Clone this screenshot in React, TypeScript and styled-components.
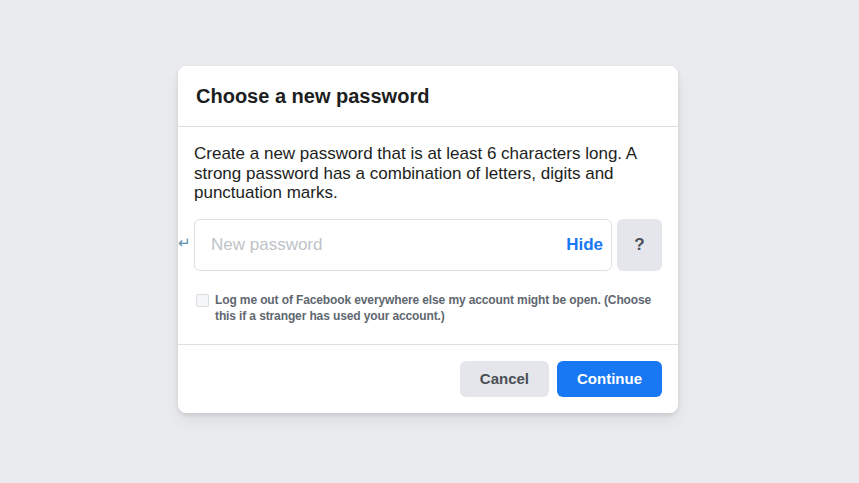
import React from "react";
import styled, { createGlobalStyle } from "styled-components";

const Global = createGlobalStyle`
  html, body { margin: 0; padding: 0; }
  body {
    background: #e9ebee;
    font-family: "Liberation Sans", Arial, Helvetica, sans-serif;
    -webkit-font-smoothing: antialiased;
  }
`;

const Page = styled.div`
  min-height: 483px;
  box-sizing: border-box;
  padding: 66px 0 0 178px;
`;

const Card = styled.div`
  width: 500px;
  background: #fff;
  border-radius: 8px;
  box-shadow: 0 2px 4px rgba(0, 0, 0, 0.1), 0 8px 16px rgba(0, 0, 0, 0.06);
`;

const Header = styled.div`
  height: 61px;
  box-sizing: border-box;
  padding: 0 16px 1px 18px;
  display: flex;
  align-items: center;
  border-bottom: 1px solid #dddfe2;
`;

const Title = styled.h2`
  margin: 0;
  font-size: 20px;
  font-weight: bold;
  color: #1c1e21;
  line-height: 24px;
`;

const Body = styled.div`
  padding: 17px 16px 20px 16px;
  border-bottom: 1px solid #dddfe2;
`;

const Intro = styled.p`
  margin: 0 0 16px 0;
  font-size: 17px;
  line-height: 19.5px;
  color: #1c1e21;
  width: 460px;
`;

const FieldRow = styled.div`
  position: relative;
  display: flex;
  gap: 5px;
  align-items: stretch;
`;

const ReturnMark = styled.span`
  position: absolute;
  left: -16px;
  top: 14px;
  font-size: 15px;
  color: #5b8fb0;
  line-height: 20px;
`;

const InputBox = styled.div`
  width: 418px;
  height: 52px;
  box-sizing: border-box;
  border: 1px solid #dddfe2;
  border-radius: 6px;
  display: flex;
  align-items: center;
  padding: 0 8px 0 16px;
`;

const Placeholder = styled.span`
  flex: 1;
  font-size: 17px;
  color: #bec3c9;
`;

const HideLink = styled.span`
  font-size: 17px;
  font-weight: bold;
  color: #1877f2;
`;

const HelpButton = styled.div`
  width: 45px;
  height: 52px;
  border-radius: 6px;
  background: #e4e6eb;
  display: flex;
  align-items: center;
  justify-content: center;
  font-size: 17px;
  font-weight: bold;
  color: #4b4f56;
`;

const CheckRow = styled.label`
  display: flex;
  gap: 6px;
  margin-top: 21px;
  padding-left: 2px;
`;

const Box = styled.span`
  flex: none;
  width: 13px;
  height: 13px;
  margin-top: 2px;
  box-sizing: border-box;
  border: 1px solid #dadde1;
  border-radius: 2px;
  background: #f5f6f7;
`;

const CheckText = styled.span`
  font-size: 12px;
  font-weight: bold;
  line-height: 16px;
  letter-spacing: -0.12px;
  color: #606770;
`;

const Footer = styled.div`
  display: flex;
  justify-content: flex-end;
  gap: 8px;
  padding: 16px;
`;

const Button = styled.button<{ $primary?: boolean }>`
  height: 36px;
  padding: 0 20px;
  min-width: ${(p) => (p.$primary ? "105px" : "88px")};
  border: none;
  border-radius: 6px;
  font-family: inherit;
  font-size: 15px;
  font-weight: bold;
  background: ${(p) => (p.$primary ? "#1877f2" : "#e4e6eb")};
  color: ${(p) => (p.$primary ? "#ffffff" : "#4b4f56")};
`;

export default function App() {
  return (
    <>
      <Global />
      <Page>
        <Card>
          <Header>
            <Title>Choose a new password</Title>
          </Header>
          <Body>
            <Intro>
              Create a new password that is at least 6 characters long. A strong
              password has a combination of letters, digits and punctuation marks.
            </Intro>
            <FieldRow>
              <ReturnMark>↵</ReturnMark>
              <InputBox>
                <Placeholder>New password</Placeholder>
                <HideLink>Hide</HideLink>
              </InputBox>
              <HelpButton>?</HelpButton>
            </FieldRow>
            <CheckRow>
              <Box />
              <CheckText>
                Log me out of Facebook everywhere else my account might be open.
                (Choose this if a stranger has used your account.)
              </CheckText>
            </CheckRow>
          </Body>
          <Footer>
            <Button>Cancel</Button>
            <Button $primary>Continue</Button>
          </Footer>
        </Card>
      </Page>
    </>
  );
}
